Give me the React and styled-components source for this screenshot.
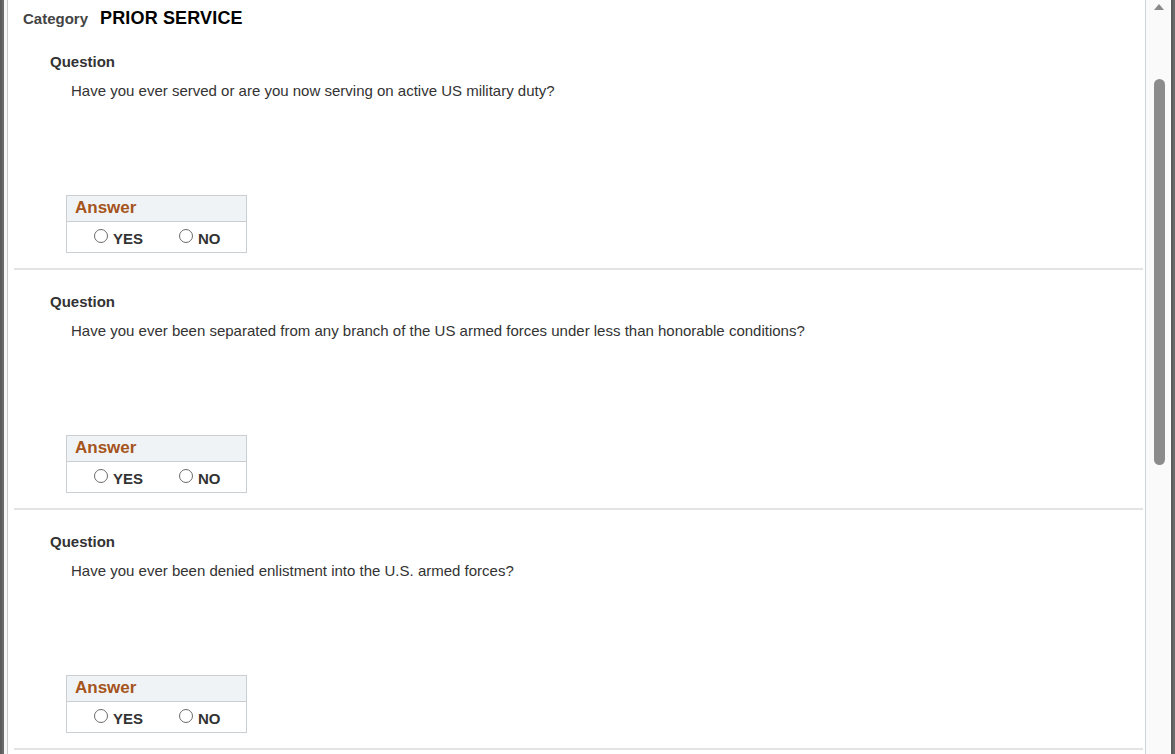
import React from 'react'
import styled, { createGlobalStyle } from 'styled-components'

const GlobalStyle = createGlobalStyle`
  html, body {
    margin: 0;
    padding: 0;
    background: #ffffff;
    overflow: hidden;
  }
  body {
    font-family: "Liberation Sans", Arial, sans-serif;
  }
`

const questions = [
  'Have you ever served or are you now serving on active US military duty?',
  'Have you ever been separated from any branch of the US armed forces under less than honorable conditions?',
  'Have you ever been denied enlistment into the U.S. armed forces?',
]

const Radio = ({ label }) => (
  <Choice>
    <Circle />
    <ChoiceText>{label}</ChoiceText>
  </Choice>
)

const QuestionBlock = ({ text }) => (
  <Section>
    <QuestionLabel>Question</QuestionLabel>
    <QuestionText>{text}</QuestionText>
    <AnswerBox>
      <AnswerHead>Answer</AnswerHead>
      <AnswerRow>
        <Radio label="YES" />
        <Radio label="NO" />
      </AnswerRow>
    </AnswerBox>
  </Section>
)

const App = () => {
  return (
    <Frame>
      <GlobalStyle />
      <LeftEdge>
        <DarkStrip />
        <LightStrip />
      </LeftEdge>
      <Main>
        <CategoryRow>
          <CategoryLabel>Category</CategoryLabel>
          <CategoryValue>PRIOR SERVICE</CategoryValue>
        </CategoryRow>
        {questions.map((q) => (
          <QuestionBlock key={q} text={q} />
        ))}
      </Main>
      <Scrollbar>
        <Track>
          <UpArrow />
          <Thumb />
        </Track>
        <DarkStrip />
      </Scrollbar>
    </Frame>
  )
}

const Frame = styled.div`
  display: flex;
  flex-direction: row;
  width: 1175px;
  height: 754px;
  overflow: hidden;
  background: #ffffff;
`

const LeftEdge = styled.div`
  display: flex;
  flex-direction: row;
  width: 8px;
  flex-shrink: 0;
`

const DarkStrip = styled.div`
  width: 2px;
  flex-shrink: 0;
  background: #5c5c5c;
  border-right: 2px solid #6a6a6a;
`

const LightStrip = styled.div`
  flex: 1;
  background: #f7f7f7;
  border-right: 1px solid #c9c9c9;
`

const Main = styled.div`
  flex: 1;
  display: flex;
  flex-direction: column;
  overflow: hidden;
`

const CategoryRow = styled.div`
  display: flex;
  align-items: center;
  gap: 12px;
  height: 20px;
  padding: 8px 15px 2px 15px;
`

const CategoryLabel = styled.span`
  font-size: 15px;
  font-weight: bold;
  color: #444444;
`

const CategoryValue = styled.span`
  font-size: 18px;
  font-weight: bold;
  color: #000000;
  letter-spacing: 0.15px;
`

const Section = styled.div`
  display: flex;
  flex-direction: column;
  align-items: flex-start;
  padding: 22px 0 15px 0;
  margin: 0 2px 0 6px;
  border-bottom: 2px solid #e3e3e3;
  flex-shrink: 0;
`

const QuestionLabel = styled.div`
  margin-left: 36px;
  font-size: 15px;
  line-height: 20px;
  font-weight: bold;
  color: #333333;
`

const QuestionText = styled.div`
  margin: 9px 0 0 57px;
  font-size: 15px;
  line-height: 20px;
  color: #333333;
`

const AnswerBox = styled.div`
  margin: 94px 0 0 52px;
  width: 179px;
  border: 1px solid #c9ced3;
  display: flex;
  flex-direction: column;
`

const AnswerHead = styled.div`
  height: 25px;
  line-height: 24px;
  padding-left: 8px;
  background: #f0f3f5;
  border-bottom: 1px solid #c9ced3;
  font-size: 17px;
  font-weight: bold;
  color: #a5541c;
`

const AnswerRow = styled.div`
  display: flex;
  align-items: center;
  gap: 36px;
  height: 30px;
  padding-left: 27px;
`

const Choice = styled.label`
  display: flex;
  align-items: center;
  gap: 5px;
  padding-top: 3px;
`

const Circle = styled.span`
  display: inline-block;
  width: 12px;
  height: 12px;
  border: 1px solid #6b6b6b;
  border-radius: 50%;
  background: #ffffff;
  margin-top: -5px;
`

const ChoiceText = styled.span`
  font-size: 15px;
  font-weight: bold;
  color: #333333;
`

const Scrollbar = styled.div`
  display: flex;
  flex-direction: row;
  width: 29px;
  flex-shrink: 0;
  border-left: 1px solid #cdd4da;
`

const Track = styled.div`
  flex: 1;
  background: #fafafa;
  display: flex;
  flex-direction: column;
  align-items: center;
  padding-left: 1px;
`

const UpArrow = styled.div`
  margin-top: 4px;
  width: 0;
  height: 0;
  border-left: 5px solid transparent;
  border-right: 5px solid transparent;
  border-bottom: 6px solid #8a8a8a;
`

const Thumb = styled.div`
  margin-top: 69px;
  width: 11px;
  height: 386px;
  border-radius: 6px;
  background: #8c8c8c;
`

export default App
